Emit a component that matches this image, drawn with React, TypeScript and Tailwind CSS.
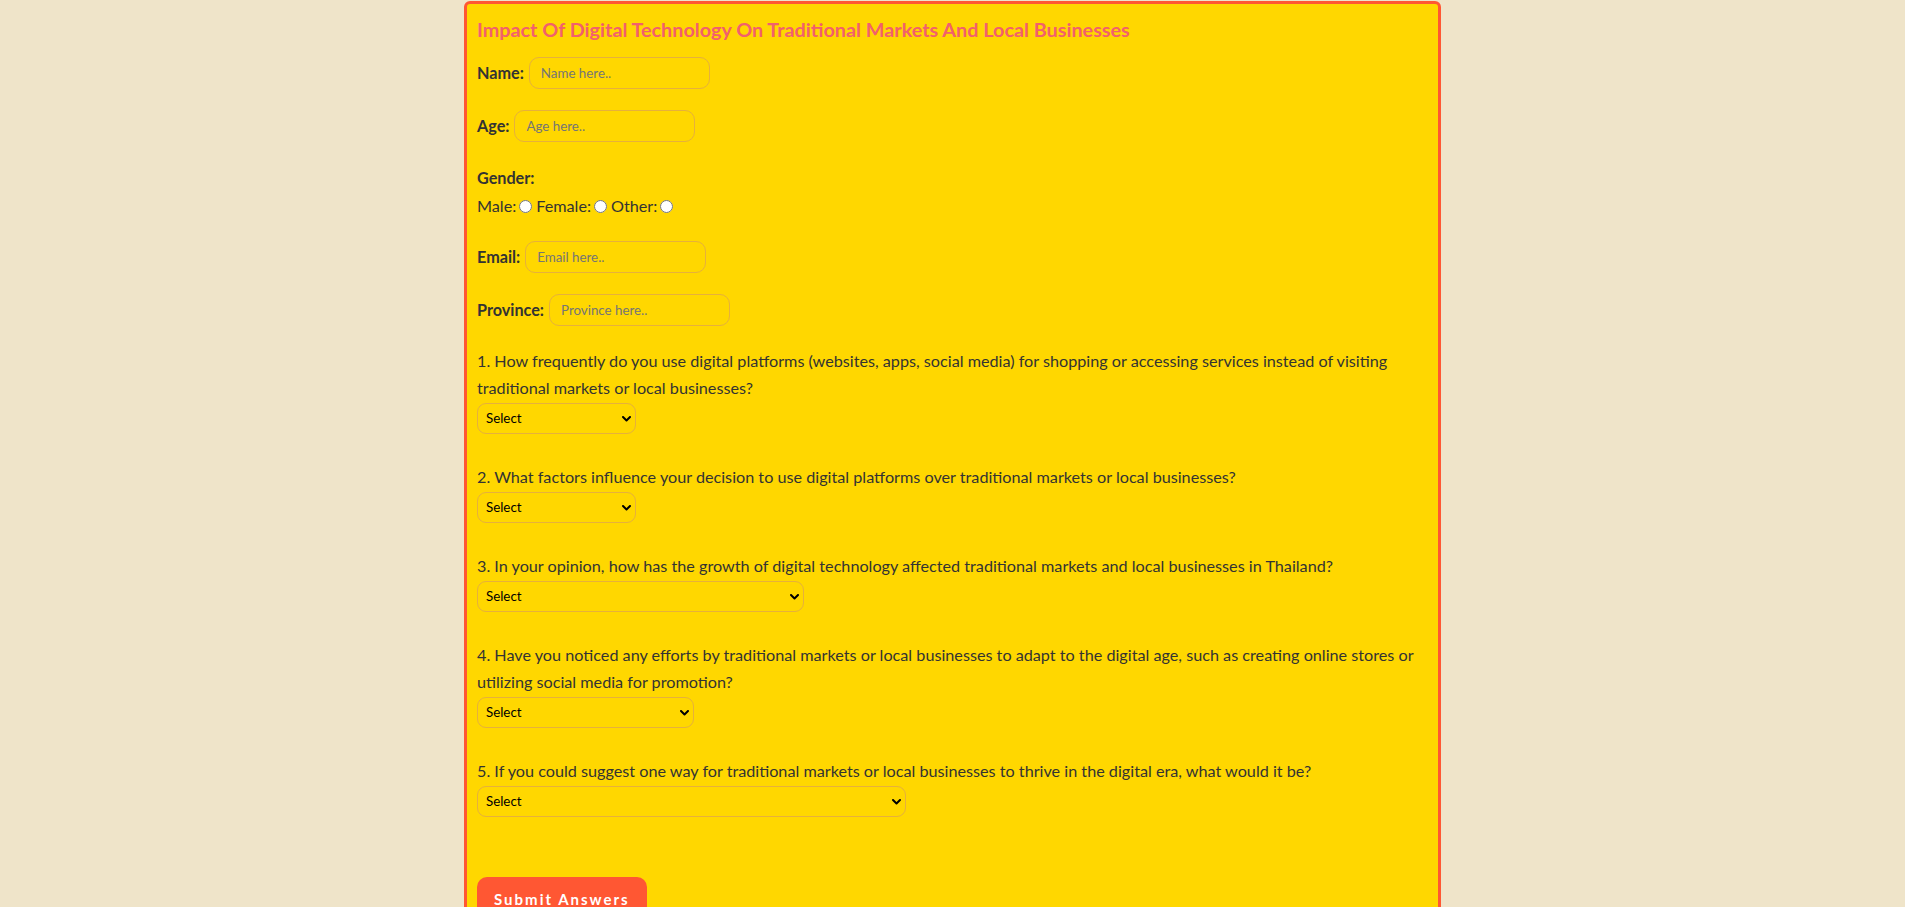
import React from "react";

function Chevron() {
  return (
    <svg
      className="pointer-events-none absolute right-[5px] top-1/2 -translate-y-1/2"
      width="9"
      height="6"
      viewBox="0 0 9 6"
      fill="none"
    >
      <path d="M1 1l3.5 3.5L8 1" stroke="#000" strokeWidth="2" strokeLinecap="round" strokeLinejoin="round" />
    </svg>
  );
}

function Field({ label, placeholder }: { label: string; placeholder: string }) {
  return (
    <div className="flex h-[32px] items-center">
      <span className="font-bold">{label}</span>
      <input
        type="text"
        placeholder={placeholder}
        className="ml-[5px] h-[32px] w-[181px] rounded-[10px] border border-[#e6b03c] bg-transparent px-[11px] text-[13.33px] text-black outline-none placeholder:text-[#757575]"
      />
    </div>
  );
}

function Question({ text, width, mt }: { text: React.ReactNode; width: string; mt: string }) {
  return (
    <div className={mt}>
      <p className="leading-[27px]">{text}</p>
      <div className={`relative mt-[2px] h-[31px] ${width}`}>
        <select className="h-[31px] w-full appearance-none rounded-[9px] border border-[#e6b03c] bg-transparent pl-[8px] text-[13.33px] text-black outline-none">
          <option>Select</option>
        </select>
        <Chevron />
      </div>
    </div>
  );
}

export default function App() {
  return (
    <div className="min-h-screen bg-[#efe4c9] pt-px font-['Lato','Noto_Sans',sans-serif] text-[16.2px] text-[#333]">
      <form className="mx-auto w-[977px] rounded-[6px] border-[3px] border-[#ff5733] bg-[#ffd700] px-[10px] pt-[10px] pb-[40px]">
        <h1 className="mt-[2px] text-[19.8px] font-bold leading-[26px] text-[#f2606c]">
          Impact Of Digital Technology On Traditional Markets And Local Businesses
        </h1>
        <div className="mt-[15px]">
          <Field label="Name:" placeholder="Name here.." />
        </div>
        <div className="mt-[21px]">
          <Field label="Age:" placeholder="Age here.." />
        </div>
        <div className="mt-[22px] leading-[28px]">
          <div className="font-bold">Gender:</div>
          <div className="flex items-center">
            <span>Male:</span>
            <input type="radio" name="gender" className="ml-[3px] mr-[3px] h-[13px] w-[13px]" />
            <span className="ml-[1px]">Female:</span>
            <input type="radio" name="gender" className="ml-[3px] mr-[3px] h-[13px] w-[13px]" />
            <span className="ml-[1px]">Other:</span>
            <input type="radio" name="gender" className="ml-[3px] mr-[3px] h-[13px] w-[13px]" />
          </div>
        </div>
        <div className="mt-[21px]">
          <Field label="Email:" placeholder="Email here.." />
        </div>
        <div className="mt-[21px]">
          <Field label="Province:" placeholder="Province here.." />
        </div>
        <Question
          mt="mt-[21px]"
          width="w-[159px]"
          text="1. How frequently do you use digital platforms (websites, apps, social media) for shopping or accessing services instead of visiting traditional markets or local businesses?"
        />
        <Question
          mt="mt-[29px]"
          width="w-[159px]"
          text="2. What factors influence your decision to use digital platforms over traditional markets or local businesses?"
        />
        <Question
          mt="mt-[29px]"
          width="w-[327px]"
          text="3. In your opinion, how has the growth of digital technology affected traditional markets and local businesses in Thailand?"
        />
        <Question
          mt="mt-[29px]"
          width="w-[217px]"
          text="4. Have you noticed any efforts by traditional markets or local businesses to adapt to the digital age, such as creating online stores or utilizing social media for promotion?"
        />
        <Question
          mt="mt-[29px]"
          width="w-[429px]"
          text="5. If you could suggest one way for traditional markets or local businesses to thrive in the digital era, what would it be?"
        />
        <button
          type="button"
          className="mt-[60px] rounded-[10px] bg-[#ff5733] px-[17px] py-[10px] text-[15px] font-bold leading-[24px] tracking-[2px] text-white"
        >
          Submit Answers
        </button>
      </form>
    </div>
  );
}
